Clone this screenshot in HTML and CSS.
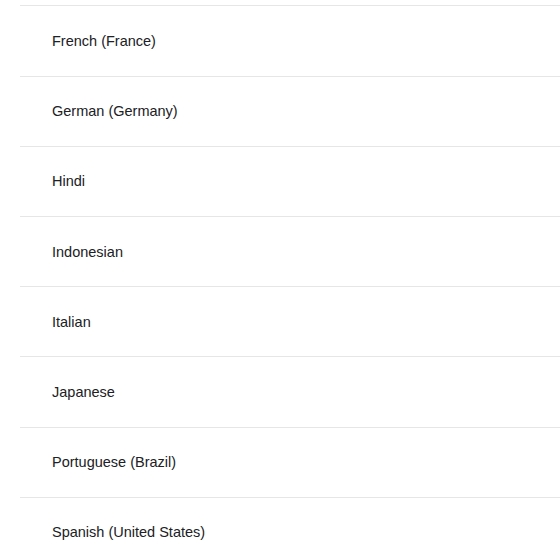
FILE: index.html
```html
<!DOCTYPE html>
<html>
<head>
<meta charset="utf-8">
<link rel="stylesheet" href="styles.css">
</head>
<body>
<ul class="lang-list">
  <li class="lang-item">French (France)</li>
  <li class="lang-item">German (Germany)</li>
  <li class="lang-item">Hindi</li>
  <li class="lang-item">Indonesian</li>
  <li class="lang-item">Italian</li>
  <li class="lang-item">Japanese</li>
  <li class="lang-item">Portuguese (Brazil)</li>
  <li class="lang-item">Spanish (United States)</li>
</ul>
</body>
</html>
```

FILE: styles.css
```css
html, body {
  margin: 0;
  padding: 0;
  background: #ffffff;
}
body {
  font-family: "Liberation Sans", Arial, sans-serif;
  overflow: hidden;
}
.lang-list {
  list-style: none;
  margin: 0 0 0 20px;
  padding: 5.4px 0 0 0;
}
.lang-item {
  box-sizing: border-box;
  display: flex;
  align-items: center;
  height: 70.2px;
  padding-left: 32px;
  border-top: 1px solid #e6e6e6;
  font-size: 14.5px;
  color: #202124;
}
```
